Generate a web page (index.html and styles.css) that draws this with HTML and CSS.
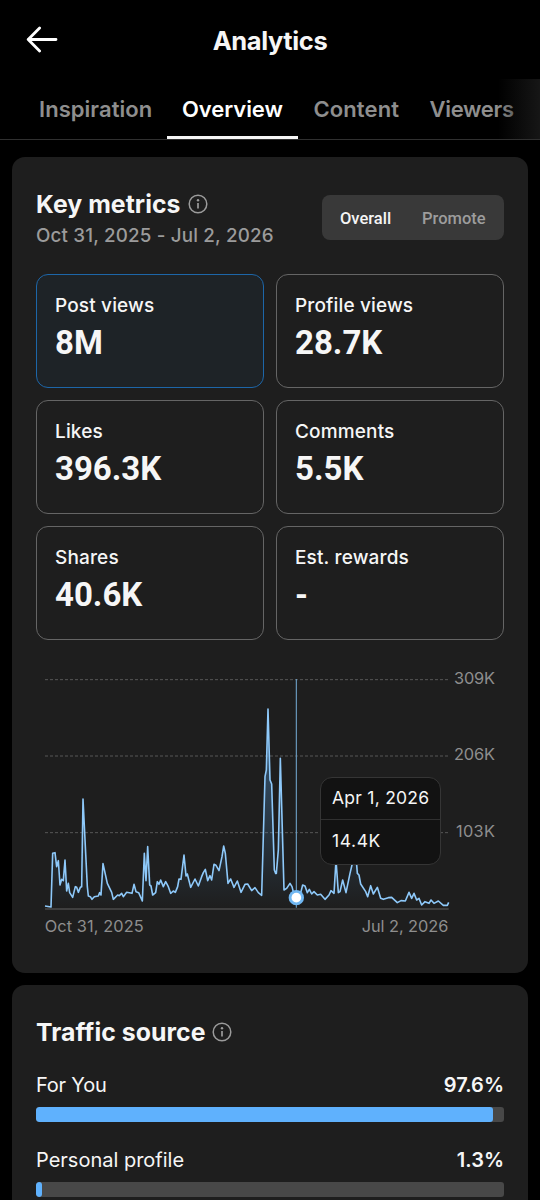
FILE: index.html
```html
<!DOCTYPE html>
<html lang="en">
<head>
<meta charset="utf-8">
<title>Analytics</title>
<link rel="stylesheet" href="styles.css">
</head>
<body>
<div class="screen">
  <header class="topbar">
    <svg class="back" width="32" height="28" viewBox="0 0 32 28" fill="none" stroke="#fff" stroke-width="2.8" stroke-linejoin="round" stroke-linecap="round"><path d="M13.6 1.9 2.2 13.5l11.4 11.6M2.2 13.5H30"/></svg>
    <h1 class="title">Analytics</h1>
  </header>
  <nav class="tabs">
    <a class="tab tab-inspiration">Inspiration</a>
    <a class="tab tab-overview active">Overview</a>
    <a class="tab tab-content">Content</a>
    <a class="tab tab-viewers">Viewers</a>
  </nav>

  <section class="card metrics">
    <div class="metrics-head">
      <div>
        <h2 class="heading key-heading"><span>Key metrics</span>
          <svg class="info" width="20" height="20" viewBox="0 0 20 20" fill="none" stroke="#9b9b9b" stroke-width="1.5"><circle cx="10" cy="10" r="8.8"/><path d="M10 9v5.4" stroke-width="1.7"/><circle cx="10" cy="6.2" r="1.2" fill="#9b9b9b" stroke="none"/></svg>
        </h2>
        <p class="range">Oct 31, 2025 - Jul 2, 2026</p>
      </div>
      <div class="toggle"><span class="toggle-on">Overall</span><span class="toggle-off">Promote</span></div>
    </div>

    <div class="grid">
      <div class="metric selected"><span class="label">Post views</span><span class="value">8M</span></div>
      <div class="metric"><span class="label">Profile views</span><span class="value">28.7K</span></div>
      <div class="metric"><span class="label">Likes</span><span class="value">396.3K</span></div>
      <div class="metric"><span class="label">Comments</span><span class="value">5.5K</span></div>
      <div class="metric"><span class="label">Shares</span><span class="value">40.6K</span></div>
      <div class="metric"><span class="label">Est. rewards</span><span class="value">-</span></div>
    </div>

    <div class="chart">
      <svg width="468" height="270" viewBox="0 0 1404 810">
        <defs><linearGradient id="area" gradientUnits="userSpaceOnUse" x1="0" y1="110" x2="0" y2="715"><stop offset="0" stop-color="#5fb3ff" stop-opacity=".45"/><stop offset=".6" stop-color="#5fb3ff" stop-opacity=".16"/><stop offset="1" stop-color="#5fb3ff" stop-opacity="0"/></linearGradient></defs>
        <path class="gridline" d="M27 29H1236M27 258H1236M27 488H1236"/>
        <path class="axis" d="M27 717H1238"/>
        <path fill="url(#area)" d="M27 717V708L45 711 50 550 57 548 72 645 87 570 101 668 137 650 141 387 154 650 157 678 191 668 201 581 214 640 232 688 288 670 319 693 325 550 330 632 335 530 350 675 364 635 397 650 404 670 429 627 444 555 464 652 508 598 527 630 534 583 549 602 563 528 576 640 615 667 635 642 677 676 687 320 691 300 696 117 702 330 707 342 715 600 719 610 727 540 733 265 744 660 762 640 781 682 800 645 867 688 894 670 900 570 907 668 920 630 930 668 952 568 960 560 974 642 995 680 1034 685 1084 698 1119 667 1157 705 1238 706V717z"/>
        <path class="series" d="M27 708L45 711 50 550 57 548 62 590 67 572 72 645 77 628 82 632 87 570 92 663 97 640 101 668 110 682 118 650 122 652 127 667 133 652 137 650 141 387 154 650 157 678 163 680 168 688 175 680 187 678 191 668 195 675 201 581 214 640 227 667 232 688 245 675 250 677 257 670 262 680 272 667 288 670 294 643 300 665 308 668 319 693 325 550 330 632 335 530 341 645 345 648 350 675 359 668 364 635 369 643 374 630 382 650 389 635 397 650 404 670 412 663 418 667 425 650 429 627 435 628 444 555 450 618 454 612 464 652 477 627 487 648 497 620 502 608 508 598 515 632 522 617 527 630 534 583 540 586 549 602 558 560 563 528 568 550 576 640 584 627 594 652 604 633 615 667 627 643 635 642 647 662 657 653 667 668 677 676 687 320 691 300 696 117 702 330 707 342 715 600 719 610 721 610 727 540 733 265 744 660 752 655 762 640 768 650 774 674 781 682 789 680 795 665 800 645 807 648 814 668 820 658 827 672 834 665 844 675 854 673 867 688 879 675 885 662 894 670 900 570 907 668 912 665 920 630 930 668 942 610 952 568 960 560 964 610 969 615 974 642 989 665 995 680 1004 647 1012 672 1024 652 1034 685 1042 688 1057 683 1067 682 1084 698 1095 692 1108 693 1119 667 1127 685 1134 670 1142 690 1149 685 1157 705 1167 695 1179 700 1185 690 1194 700 1207 693 1222 706 1234 706 1238 697"/>
        <path class="cursor" d="M781 27V713"/>
        <circle cx="781" cy="683" r="23" fill="#70b7f2"/><circle cx="781" cy="683" r="14.5" fill="#fff"/>
        <text class="tick" x="1254" y="42" textLength="123">309K</text>
        <text class="tick" x="1254" y="271" textLength="123">206K</text>
        <text class="tick" x="1260" y="501" textLength="117">103K</text>
        <text class="tick" x="26" y="787" textLength="297">Oct 31, 2025</text>
        <text class="tick" x="977" y="787" textLength="260">Jul 2, 2026</text>
      </svg>
      <div class="tooltip"><div class="tip-date">Apr 1, 2026</div><div class="tip-value">14.4K</div></div>
    </div>
  </section>

  <section class="card traffic">
    <h2 class="heading traffic-heading"><span>Traffic source</span>
      <svg class="info" width="20" height="20" viewBox="0 0 20 20" fill="none" stroke="#9b9b9b" stroke-width="1.5"><circle cx="10" cy="10" r="8.8"/><path d="M10 9v5.4" stroke-width="1.7"/><circle cx="10" cy="6.2" r="1.2" fill="#9b9b9b" stroke="none"/></svg>
    </h2>
    <div class="source">
      <div class="source-row"><span class="source-name name-foryou">For You</span><span class="source-value">97.6%</span></div>
      <div class="bar"><div class="fill" style="width:97.6%"></div></div>
    </div>
    <div class="source">
      <div class="source-row"><span class="source-name">Personal profile</span><span class="source-value">1.3%</span></div>
      <div class="bar"><div class="fill" style="width:1.3%"></div></div>
    </div>
  </section>
</div>
</body>
</html>
```
FILE: styles.css
```css
* { box-sizing: border-box; }
body { margin: 0; background: #000; color: #f6f6f6; font-family: Inter, "Liberation Sans", sans-serif; }
h1, h2, p { margin: 0; }
.screen { width: 540px; height: 1200px; overflow: hidden; background: #000; }

.topbar { position: relative; display: flex; justify-content: center; height: 79px; padding-top: 25px; }
.back { position: absolute; left: 26px; top: 26px; }
.title { font-size: 25.5px; line-height: 32px; font-weight: 700; letter-spacing: -0.4px; }

.tabs { position: relative; display: flex; height: 61px; padding-left: 24px; border-bottom: 1px solid #303030; overflow: hidden; }
.tabs::after { content: ""; position: absolute; right: 0; top: 0; width: 42px; height: 60px; background: linear-gradient(90deg, transparent, #161616); }
.tab { flex: none; height: 60px; padding: 15px 0 0 15px; font-size: 22px; line-height: 30px; font-weight: 600; color: #8e8e8e; white-space: nowrap; }
.tab-inspiration { width: 143px; letter-spacing: 0.05px; }
.tab-overview { width: 131px; letter-spacing: -0.05px; }
.tab-content { width: 116.5px; padding-left: 15.5px; letter-spacing: 0.1px; }
.tab-viewers { letter-spacing: -0.3px; }
.active { color: #fff; border-bottom: 3px solid #f5f5f5; }

.card { margin: 0 12px; padding: 0 24px; border-radius: 13px; background: #1e1e1e; }
.metrics { margin-top: 17px; height: 815.5px; padding-top: 31px; }
.metrics-head { display: flex; justify-content: space-between; height: 86px; }
.heading { display: flex; align-items: center; font-size: 24.8px; line-height: 32px; font-weight: 700; letter-spacing: 0.05px; white-space: nowrap; }
.key-heading span { padding-top: 1px; line-height: 31px; }
.info { flex: none; margin-left: 7px; }
.range { margin-top: 3px; font-size: 18.8px; line-height: 26px; font-weight: 500; letter-spacing: 0.17px; color: #9b9b9b; white-space: nowrap; }
.toggle { display: flex; width: 182px; height: 45px; margin-top: 7px; padding-left: 18px; border-radius: 8px; background: #393939; font: 500 16.5px/48px Roboto, sans-serif; }
.toggle-on { width: 82px; color: #f5f5f5; }
.toggle-off { color: #9d9d9d; }

.grid { display: grid; grid-template-columns: 228px 228px; grid-auto-rows: 114px; gap: 12px; }
.metric { display: flex; flex-direction: column; padding: 18px 0 0 18px; border: 1px solid #656565; border-radius: 12px; }
.selected { border-color: #1d66a8; background: #1e2327; }
.label { font-size: 19px; line-height: 26px; font-weight: 500; letter-spacing: 0.15px; }
.value { margin-top: 4px; font: 700 33px/40px Roboto, sans-serif; }

.chart { position: relative; height: 270px; margin-top: 30px; }
.chart svg { display: block; overflow: visible; }
.gridline { fill: none; stroke: #575757; stroke-width: 3; stroke-dasharray: 9 6; }
.axis { stroke: #4b4b4b; stroke-width: 4; }
.series { fill: none; stroke: #8ec9fa; stroke-width: 4.8; stroke-linejoin: round; }
.cursor { stroke: #6d9fc4; stroke-width: 3.4; }
.tick { font-size: 49px; fill: #8e8e8e; }
.tooltip { position: absolute; left: 284px; top: 107px; width: 121px; height: 88px; border: 1px solid #353535; border-radius: 12px; background: #121212; font-size: 17.5px; letter-spacing: 0.25px; overflow: hidden; white-space: nowrap; }
.tip-date { height: 42px; padding: 0 0 0 11px; line-height: 39px; border-bottom: 1px solid #303030; }
.tip-value { padding-left: 11px; line-height: 41px; letter-spacing: 0.6px; }

.traffic { margin-top: 12px; height: 240px; padding-top: 31px; }
.traffic-heading { height: 32px; margin-bottom: 22px; }
.source { height: 75px; }
.source-row { display: flex; justify-content: space-between; line-height: 31px; font-size: 20px; }
.source-value { font-weight: 600; }
.name-foryou { letter-spacing: -0.2px; }
.bar { height: 15px; margin-top: 6px; border-radius: 3px; background: #484848; overflow: hidden; }
.fill { height: 15px; border-radius: 3px; background: #5fb1fd; }
```
